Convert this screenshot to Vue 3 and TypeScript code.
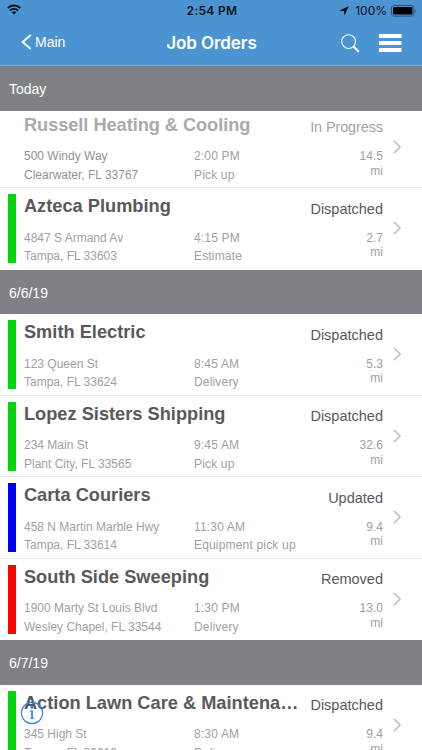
<script setup lang="ts">
interface Job {
  name: string
  street: string
  city: string
  time: string
  task: string
  status: string
  miles: string
  color: string
  muted?: boolean
}

interface Section {
  label: string
  jobs: Job[]
}

const GREEN = '#00d40a'
const BLUE = '#0000fa'
const RED = '#fd0000'

const sections: Section[] = [
  {
    label: 'Today',
    jobs: [
      { name: 'Russell Heating & Cooling', street: '500 Windy Way', city: 'Clearwater, FL 33767', time: '2:00 PM', task: 'Pick up', status: 'In Progress', miles: '14.5', color: 'transparent', muted: true },
      { name: 'Azteca Plumbing', street: '4847 S Armand Av', city: 'Tampa, FL 33603', time: '4:15 PM', task: 'Estimate', status: 'Dispatched', miles: '2.7', color: GREEN },
    ],
  },
  {
    label: '6/6/19',
    jobs: [
      { name: 'Smith Electric', street: '123 Queen St', city: 'Tampa, FL 33624', time: '8:45 AM', task: 'Delivery', status: 'Dispatched', miles: '5.3', color: GREEN },
      { name: 'Lopez Sisters Shipping', street: '234 Main St', city: 'Plant City, FL 33565', time: '9:45 AM', task: 'Pick up', status: 'Dispatched', miles: '32.6', color: GREEN },
      { name: 'Carta Couriers', street: '458 N Martin Marble Hwy', city: 'Tampa, FL 33614', time: '11:30 AM', task: 'Equipment pick up', status: 'Updated', miles: '9.4', color: BLUE },
      { name: 'South Side Sweeping', street: '1900 Marty St Louis Blvd', city: 'Wesley Chapel, FL 33544', time: '1:30 PM', task: 'Delivery', status: 'Removed', miles: '13.0', color: RED },
    ],
  },
  {
    label: '6/7/19',
    jobs: [
      { name: 'Action Lawn Care & Maintenance', street: '345 High St', city: 'Tampa, FL 33612', time: '8:30 AM', task: 'Delivery', status: 'Dispatched', miles: '9.4', color: GREEN },
    ],
  },
]
</script>

<template>
  <div class="screen">
    <header class="top">
      <div class="statusbar">
        <div class="side">
          <svg class="wifi" width="14" height="11" viewBox="0 0 14 11">
            <g fill="none" stroke="#071018" stroke-width="1.9">
              <path d="M0.8 4 A8.8 8.8 0 0 1 13.2 4" />
              <path d="M3 6.6 A5.6 5.6 0 0 1 11 6.6" />
            </g>
            <path d="M7 10.6 L4.7 8.3 A3.3 3.3 0 0 1 9.3 8.3 Z" fill="#071018" />
          </svg>
        </div>
        <span class="clock">2:54 PM</span>
        <div class="side end">
          <svg class="loc" width="10" height="10" viewBox="0 0 10 10">
            <path d="M9.7 0.3 L5.6 9.6 L4.9 5.1 L0.3 4.5 Z" fill="#071018" />
          </svg>
          <span class="percent">100%</span>
          <svg width="26" height="12" viewBox="0 0 26 12">
            <rect x="0.5" y="0.5" width="22.4" height="10.6" rx="2.2" fill="none" stroke="#2b5274" />
            <rect x="2" y="2" width="19.4" height="7.6" rx="0.8" fill="#000" />
            <path d="M24.2 4 Q25.7 5.8 24.2 7.6 Z" fill="#2b5274" />
          </svg>
        </div>
      </div>
      <nav class="navbar">
        <div class="side back">
          <svg width="11" height="16" viewBox="0 0 11 16">
            <path d="M9.7 0.9 L1.7 7.9 L9.7 14.9" fill="none" stroke="#fff" stroke-width="2" />
          </svg>
          <span class="main">Main</span>
        </div>
        <h1 class="heading">Job Orders</h1>
        <div class="side end actions">
          <svg width="19" height="19" viewBox="0 0 19 19">
            <circle cx="7.6" cy="7.6" r="6.9" fill="none" stroke="#fff" stroke-width="1.1" />
            <path d="M12.3 12.3 L17.8 17.8" stroke="#fff" stroke-width="2" />
          </svg>
          <svg width="23" height="20" viewBox="0 0 23 20">
            <path d="M0 1h22.5v4H0z M0 8h22.5v4H0z M0 15h22.5v4H0z" fill="#fff" />
          </svg>
        </div>
      </nav>
    </header>

    <main class="list">
      <section v-for="section in sections" :key="section.label" class="group">
        <h2 class="day">{{ section.label }}</h2>
        <ul class="jobs">
          <li v-for="job in section.jobs" :key="job.name" class="job" :class="{ muted: job.muted }">
            <span class="bar" :style="{ background: job.color }"></span>
            <div class="body">
              <div class="line">
                <h3 class="name">{{ job.name }}</h3>
                <span class="status">{{ job.status }}</span>
              </div>
              <div class="details">
                <div class="address"><div>{{ job.street }}</div><div>{{ job.city }}</div></div>
                <div class="task"><div>{{ job.time }}</div><div>{{ job.task }}</div></div>
                <div class="miles"><div>{{ job.miles }}</div><div>mi</div></div>
              </div>
            </div>
            <svg class="chevron" width="9" height="14" viewBox="0 0 9 14">
              <path d="M0.9 0.9 L7.1 7 L0.9 13.1" fill="none" stroke="#c3c3c7" stroke-width="1.7" />
            </svg>
          </li>
        </ul>
      </section>
    </main>

    <svg class="info" width="24" height="24" viewBox="0 0 24 24">
      <circle cx="12" cy="12" r="10.6" fill="none" stroke="#2c82e2" stroke-width="1.1" />
      <circle cx="11.8" cy="6.5" r="1.4" fill="#2c82e2" />
      <path d="M9.7 9.6 H12.9 V17.2 H14.4 V18 H9.7 V17.2 H11.2 V10.4 H9.7 Z" fill="#2c82e2" />
    </svg>
  </div>
</template>

<style>
body {
  margin: 0;
  overflow: hidden;
}
</style>

<style scoped>
.screen {
  position: relative;
  width: 422px;
  height: 750px;
  overflow: hidden;
  background: #fff;
  font-family: 'Liberation Sans', Arial, sans-serif;
}
h1, h2, h3, ul {
  margin: 0;
  padding: 0;
}
.top {
  height: 66px;
  box-sizing: border-box;
  background: #4b94d1;
  border-bottom: 1px solid #78a8cf;
}
.statusbar {
  display: flex;
  align-items: center;
  height: 21px;
  padding: 0 5px 0 7px;
  color: #071018;
  font-family: Inter, sans-serif;
}
.side {
  display: flex;
  flex: 1 1 0;
  align-items: center;
}
.end {
  justify-content: flex-end;
}
.wifi {
  margin-top: -3px;
}
.clock {
  font-size: 12px;
  font-weight: 600;
  letter-spacing: 0.3px;
}
.loc {
  margin-right: 6px;
}
.percent {
  margin-right: 4px;
  font-size: 12px;
}
.navbar {
  display: flex;
  align-items: center;
  height: 44px;
  padding: 0 20px 0 21px;
  color: #fff;
}
.back {
  gap: 3px;
  margin-top: -3px;
}
.main {
  font-size: 14px;
}
.heading {
  font-family: Inter, sans-serif;
  font-size: 17px;
  font-weight: 600;
  letter-spacing: -0.08px;
  line-height: 44px;
}
.actions {
  gap: 19px;
}
.list {
  display: flex;
  flex-direction: column;
}
.day {
  position: relative;
  z-index: 1;
  height: 44.5px;
  padding-left: 9px;
  background: #808184;
  color: #fff;
  font-size: 14px;
  font-weight: 400;
  line-height: 46px;
}
.group:first-child .day {
  height: 45px;
}
.group:first-child .jobs {
  margin-top: -4.5px;
}
.jobs {
  list-style: none;
}
.job {
  display: flex;
  box-sizing: border-box;
  height: 81.5px;
  padding-left: 8.4px;
  border-bottom: 1px solid #e9e9eb;
}
.job:last-child {
  border-bottom-color: #fff;
}
.bar {
  width: 7.2px;
  height: 69px;
  margin: 6.3px 8.4px 0 0;
}
.body {
  width: 359px;
  padding-top: 7.3px;
}
.line {
  display: flex;
  justify-content: space-between;
}
.name {
  max-width: 280px;
  overflow: hidden;
  color: #58595b;
  font-size: 18.2px;
  letter-spacing: 0.02px;
  line-height: 22px;
  text-overflow: ellipsis;
  white-space: nowrap;
}
.status {
  margin-top: 4.4px;
  color: #58595b;
  font-size: 14.5px;
  line-height: 18px;
}
.details {
  display: flex;
  margin-top: 11.1px;
  color: #a0a0a4;
  font-size: 12px;
  line-height: 18.3px;
}
.address {
  width: 170px;
}
.task {
  flex: 1;
  letter-spacing: 0.18px;
}
.miles {
  margin-top: 2.2px;
  line-height: 14.5px;
  text-align: right;
}
.chevron {
  margin: 33px 0 0 10px;
}
.muted .name {
  color: #a9aaac;
  letter-spacing: -0.04px;
}
.muted .status {
  color: #a4a4a7;
  letter-spacing: -0.12px;
}
.muted .address {
  color: #919296;
}
.info {
  position: absolute;
  left: 20px;
  top: 701px;
}
</style>
